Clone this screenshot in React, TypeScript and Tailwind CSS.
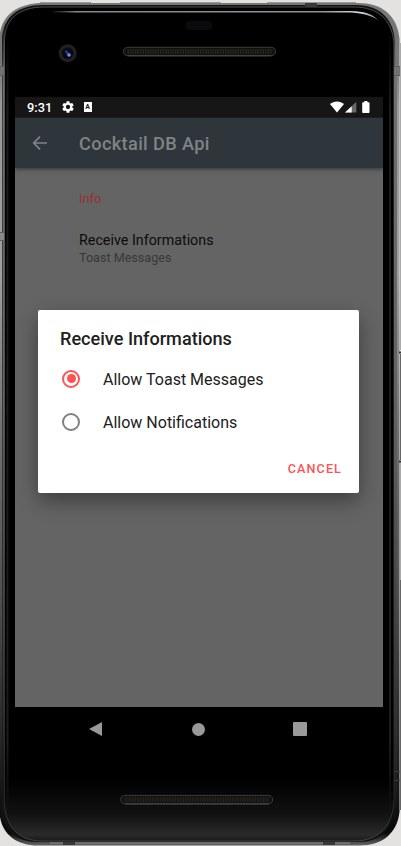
import React from "react";

function Speaker({ x, y }: { x: number; y: number }) {
  return (
    <g>
      <rect x={x} y={y} width="152" height="8.4" rx="4.2" fill="#11110f" stroke="#3c3c38" strokeWidth="1" />
      <path d={`M${x + 4} ${y + 4.2}H${x + 148}`} stroke="#25231d" strokeWidth="5" strokeDasharray="1.5 1" />
      <path d={`M${x + 4} ${y + 8.6}H${x + 148}`} stroke="#5b5b59" strokeWidth="0.7" />
    </g>
  );
}

function DeviceFrame() {
  return (
    <svg className="absolute inset-0" width="401" height="846" viewBox="0 0 401 846" aria-hidden="true">
      <defs>
        <linearGradient id="metal" x1="0" y1="0" x2="0" y2="1">
          <stop offset="0" stopColor="#777777" />
          <stop offset="0.07" stopColor="#777777" />
          <stop offset="0.12" stopColor="#999999" />
          <stop offset="0.32" stopColor="#a0a0a0" />
          <stop offset="0.5" stopColor="#727272" />
          <stop offset="0.7" stopColor="#505050" />
          <stop offset="0.88" stopColor="#252525" />
          <stop offset="0.985" stopColor="#080808" />
          <stop offset="1" stopColor="#666666" />
        </linearGradient>
        <linearGradient id="rim" x1="0" y1="0" x2="0" y2="1">
          <stop offset="0" stopColor="#4a4a4a" />
          <stop offset="0.65" stopColor="#3c3c3c" />
          <stop offset="0.95" stopColor="#272727" />
          <stop offset="1" stopColor="#444444" />
        </linearGradient>
        <linearGradient id="glass" x1="0" y1="780" x2="0" y2="841" gradientUnits="userSpaceOnUse">
          <stop offset="0" stopColor="#000000" />
          <stop offset="0.55" stopColor="#111111" />
          <stop offset="0.9" stopColor="#2a2a2a" />
          <stop offset="1" stopColor="#191919" />
        </linearGradient>
        <linearGradient id="edge" x1="0" y1="20" x2="0" y2="830" gradientUnits="userSpaceOnUse">
          <stop offset="0" stopColor="#707070" stopOpacity="0" />
          <stop offset="0.08" stopColor="#707070" />
          <stop offset="0.5" stopColor="#606060" />
          <stop offset="0.85" stopColor="#333333" />
          <stop offset="1" stopColor="#222222" stopOpacity="0" />
        </linearGradient>
        <linearGradient id="bevel" x1="0" y1="30" x2="0" y2="820" gradientUnits="userSpaceOnUse">
          <stop offset="0" stopColor="#1c1c1c" stopOpacity="0" />
          <stop offset="0.1" stopColor="#1c1c1c" />
          <stop offset="0.9" stopColor="#1c1c1c" />
          <stop offset="1" stopColor="#1c1c1c" stopOpacity="0" />
        </linearGradient>
        <linearGradient id="shine" x1="50" y1="0" x2="380" y2="0" gradientUnits="userSpaceOnUse">
          <stop offset="0" stopColor="#777777" stopOpacity="0" />
          <stop offset="0.08" stopColor="#888888" />
          <stop offset="0.82" stopColor="#8d9292" />
          <stop offset="0.94" stopColor="#d8dddd" />
          <stop offset="1" stopColor="#777777" />
        </linearGradient>
      </defs>
      <rect width="401" height="846" fill="#e3e2e0" />
      <path d="M0 33C3 13 20 3 43 3H358C382 3 397 15 399.5 39V812C397 833 383 845.5 359 845.5H38C17 845.5 3 835 0 817Z" fill="url(#metal)" />
      <path d="M2 37C4 17 18 5 43 5H356C381 5 394 20 395 43V804C394 829 381 842 358 842H38C15 842 3 830 2 808Z" fill="#111111" />
      <path d="M4.5 40C5 18 20 7 44 7H354C378 7 393 20 394 45V800C393 825 380 841 354 841H42C18 841 5 826 4.5 802Z" fill="url(#glass)" stroke="url(#rim)" strokeWidth="1" />
      <path d="M6.5 30h2v790h-2zM389 30h2v790h-2z" fill="url(#bevel)" />
      <path d="M2.5 20h2v810h-2zM394 20h3v810h-3z" fill="url(#edge)" />
      <path d="M400.5 43V350M400.5 462V580" stroke="#aaaaaa" strokeWidth="1" />
      <path d="M400.5 354V460M400.5 580V810" stroke="#666666" strokeWidth="1" />
      <path d="M52 11H351C363 11.2 373 14 378 20C369 14.5 360 12.6 347 12.6H52Z" fill="url(#shine)" />
      <path d="M0 66.5H4M0 75.5H4M394 66.5H400M394 75.5H400M0 232.5H4M0 240.5H4" stroke="#5d5d5f" />
      <path d="M394 771.5H400M394 780.5H400" stroke="#3b3b3b" />
      <path d="M0 67h4v8H0zM394 67h6v8h-6z" fill="#717174" />
      <path d="M0 233h4v7H0z" fill="#8a8a8a" />
      <path d="M399 352.5H401M399 461.5H401" stroke="#333333" strokeWidth="2" />
      <path d="M50 843H350" stroke="#777777" strokeWidth="1.5" />
      <path d="M305 3h12v4h-12zM63 842h12v3H63zM323 842h12v3h-12z" fill="#393939" />
      <path d="M40 2.5H91M120 2.5H221M267 2.5H356" stroke="#999999" />
      <rect x="185.5" y="21" width="27" height="9" rx="4.5" fill="#0a0b0e" />
      <circle cx="67.7" cy="53.2" r="9" fill="#202021" />
      <circle cx="67.7" cy="53.2" r="5.7" fill="#080a12" />
      <path d="M66 51.5l3 3" stroke="#26347d" strokeWidth="2.5" strokeLinecap="round" />
      <circle cx="69" cy="55" r="1.8" fill="#7088ee" />
      <Speaker x={123.5} y={47.3} />
      <Speaker x={120.7} y={795.4} />
    </svg>
  );
}

function StatusBar() {
  return (
    <div className="flex h-[21px] items-center border-b border-[#202326] bg-[#161616] pl-3 text-white">
      <span className="w-[34px] pt-px text-[12.8px] leading-5 font-medium">9:31</span>
      <svg className="ml-px" width="12" height="12" viewBox="2 2 20 20" fill="currentColor">
        <path d="M19.14 12.94c.04-.3.06-.61.06-.94 0-.32-.02-.64-.07-.94l2.03-1.58a.49.49 0 0 0 .12-.61l-1.92-3.32a.49.49 0 0 0-.59-.22l-2.39.96c-.5-.38-1.03-.7-1.62-.94l-.36-2.54a.48.48 0 0 0-.48-.41h-3.84a.48.48 0 0 0-.47.41l-.36 2.54c-.59.24-1.13.57-1.62.94l-2.39-.96a.49.49 0 0 0-.59.22L2.74 8.87a.48.48 0 0 0 .12.61l2.03 1.58c-.05.3-.09.63-.09.94s.02.64.07.94l-2.03 1.58a.49.49 0 0 0-.12.61l1.92 3.32c.12.22.37.29.59.22l2.39-.96c.5.38 1.03.7 1.62.94l.36 2.54c.05.24.24.41.48.41h3.84c.24 0 .44-.17.47-.41l.36-2.54c.59-.24 1.13-.56 1.62-.94l2.39.96c.22.08.47 0 .59-.22l1.92-3.32a.48.48 0 0 0-.12-.61zM12 15.6a3.6 3.6 0 1 1 0-7.2 3.6 3.6 0 0 1 0 7.2" />
      </svg>
      <span className="ml-[9.5px] flex h-[10px] w-2 items-center justify-center bg-white text-[7px] leading-none font-bold text-[#161616]">A</span>
      <svg className="ml-auto" width="14" height="12" viewBox="0 0 14 12" fill="#fff"><path d="M0 3C3.9-.5 10.1-.5 14 3L7 11.5Z" /></svg>
      <svg className="ml-[1.5px]" width="12" height="12" viewBox="0 0 12 12"><path d="M0 11.5L11.3.8V11.5Z" fill="#656869" /><path d="M0 11.5L6.7 5.2V11.5Z" fill="#fff" /></svg>
      <svg className="mr-[13px] ml-[5px]" width="8" height="12" viewBox="0 0 8 12" fill="#fff"><path d="M2.3 0h3.1v1.2h1.3a.8.8 0 0 1 .8.8v9.2a.8.8 0 0 1-.8.8H1a.8.8 0 0 1-.8-.8V2a.8.8 0 0 1 .8-.8h1.3z" /></svg>
    </div>
  );
}

function Option({ label, checked }: { label: string; checked?: boolean }) {
  return (
    <div role="radio" aria-checked={!!checked} className="flex h-[43px] items-center pl-6">
      <span className={`mb-[2px] flex size-[18px] items-center justify-center rounded-full border-2 ${checked ? "border-[#ff5252]" : "border-[#808080]"}`}>
        {checked && <span className="size-[9px] rounded-full bg-[#ff5252]" />}
      </span>
      <span className="ml-[23px] text-[16px] leading-6 text-[#212121]">{label}</span>
    </div>
  );
}

export default function App() {
  return (
    <div className="relative h-[846px] w-[401px] overflow-hidden font-['Roboto',sans-serif]">
      <DeviceFrame />
      <div className="relative pt-[97px] pl-[15px]">
        <main className="relative flex h-[610px] w-[368px] flex-col bg-[#646464]">
          <StatusBar />
          <header className="flex h-[50px] items-center bg-[#2e363c] pl-[17px] text-[#808386] shadow-[0_1px_4px_rgba(0,0,0,0.5)]">
            <svg width="16" height="16" viewBox="0 0 16 16" fill="none" stroke="currentColor" strokeWidth="1.7"><path d="M15 8H2M8 1.6L1.7 8L8 14.4" /></svg>
            <h1 className="ml-[31px] pt-px text-[18.2px] leading-6 font-medium tracking-[0.35px]">Cocktail DB Api</h1>
          </header>
          <section className="pt-[22px] pl-16">
            <h2 className="text-[12.8px] leading-[18px] text-[#9a3030]">Info</h2>
            <p className="mt-[22px] text-[14.3px] leading-5 text-[#0c0c0c]">Receive Informations</p>
            <p className="text-[12.6px] leading-[15px] text-[#383838]">Toast Messages</p>
          </section>
          <div role="dialog" className="absolute top-[213px] left-[23px] flex h-[183px] w-[321px] flex-col rounded-[2px] bg-white pt-[17px] shadow-[0_8px_20px_rgba(0,0,0,0.38)]">
            <h2 className="pl-[22px] text-[18.1px] leading-6 font-medium text-[#212121]">Receive Informations</h2>
            <div className="mt-[7px]">
              <Option label="Allow Toast Messages" checked />
              <Option label="Allow Notifications" />
            </div>
            <button className="mt-[15px] mr-[17px] self-end text-[12.6px] leading-5 font-medium tracking-[1.1px] text-[#ff5252]">CANCEL</button>
          </div>
        </main>
        <nav className="flex h-11 w-[368px] items-center pl-[74px] text-[#999]">
          <svg width="14" height="14" viewBox="0 0 14 14" fill="currentColor"><path d="M0 7L13 0V14Z" /></svg>
          <span className="ml-[89px] size-[13px] rounded-full bg-[#999]" />
          <span className="ml-[88px] size-[14px] rounded-[1px] bg-[#999]" />
        </nav>
      </div>
    </div>
  );
}
